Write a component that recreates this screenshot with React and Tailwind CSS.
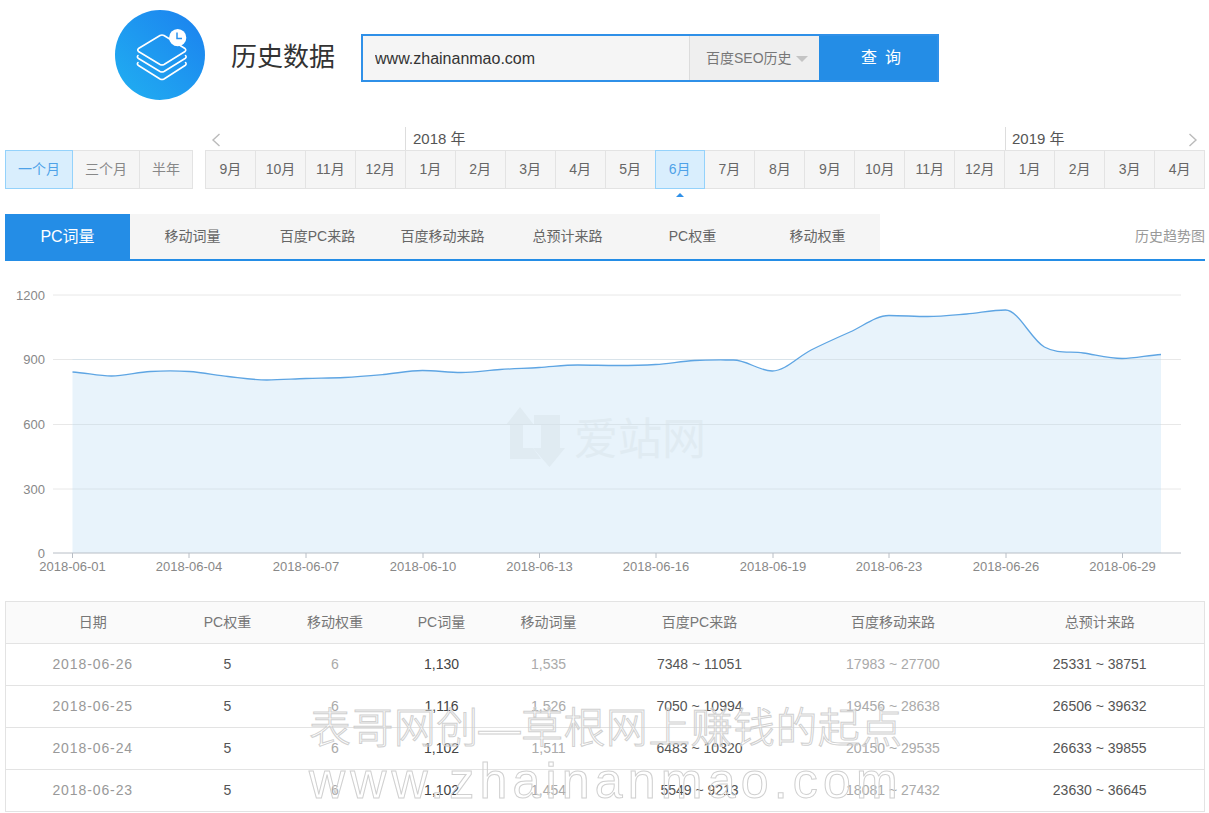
import React from "react";

const months = ["9月", "10月", "11月", "12月", "1月", "2月", "3月", "4月", "5月", "6月", "7月", "8月", "9月", "10月", "11月", "12月", "1月", "2月", "3月", "4月"];
const tabs = ["PC词量", "移动词量", "百度PC来路", "百度移动来路", "总预计来路", "PC权重", "移动权重"];

const rows = [
  ["2018-06-26", "5", "6", "1,130", "1,535", "7348 ~ 11051", "17983 ~ 27700", "25331 ~ 38751"],
  ["2018-06-25", "5", "6", "1,116", "1,526", "7050 ~ 10994", "19456 ~ 28638", "26506 ~ 39632"],
  ["2018-06-24", "5", "6", "1,102", "1,511", "6483 ~ 10320", "20150 ~ 29535", "26633 ~ 39855"],
  ["2018-06-23", "5", "6", "1,102", "1,454", "5549 ~ 9213", "18081 ~ 27432", "23630 ~ 36645"],
];

const ys = [372, 376, 371.5, 371.5, 376.5, 380, 378.5, 377.5, 374.5, 370.5, 372.5, 369.5, 367.5, 365, 365.5, 364.5, 360.5, 360, 371, 350, 332, 315.5, 316.5, 314, 310, 347, 353, 358.5, 354.5];
const points = ys.map((y, i) => [72.5 + i * 38.875, y - 285]);

// slope at a point, flat at local peaks and dips
const slope = (i) => {
  const prev = points[Math.max(i - 1, 0)][1];
  const cur = points[i][1];
  const next = points[Math.min(i + 1, points.length - 1)][1];
  if ((cur - prev) * (next - cur) < 0) return 0;
  return (next - prev) / 6;
};

const linePath = () => {
  let d = `M${points[0][0]} ${points[0][1]}`;
  for (let i = 0; i < points.length - 1; i++) {
    const p1 = points[i];
    const p2 = points[i + 1];
    d += ` C${p1[0] + 13} ${p1[1] + slope(i)} ${p2[0] - 13} ${p2[1] - slope(i + 1)} ${p2[0]} ${p2[1]}`;
  }
  return d;
};

const ticks = [
  ["2018-06-01", 72.5],
  ["2018-06-04", 189],
  ["2018-06-07", 306],
  ["2018-06-10", 423],
  ["2018-06-13", 539.5],
  ["2018-06-16", 656],
  ["2018-06-19", 773],
  ["2018-06-23", 889],
  ["2018-06-26", 1006],
  ["2018-06-29", 1122.5],
];

const yLabels = [
  ["1200", 10],
  ["900", 74.5],
  ["600", 139.5],
  ["300", 204],
];

const Logo = () => (
  <svg width="90" height="90" viewBox="0 0 90 90" className="shrink-0">
    <defs>
      <linearGradient id="logoBg" x1="0.15" y1="0.9" x2="0.9" y2="0.15">
        <stop offset="0" stopColor="#20aaf1" />
        <stop offset="1" stopColor="#1c86ef" />
      </linearGradient>
    </defs>
    <circle cx="45" cy="45" r="45" fill="url(#logoBg)" />
    <g fill="none" stroke="#fff" strokeWidth="1.6" strokeLinejoin="round" strokeLinecap="round">
      <path d="M23.5 38.5 L45 25.5 Q47 24.5 49 25.5 L70 38.5 Q71.5 40 70 41.5 L49 54.5 Q47 55.5 45 54.5 L23.5 41.5 Q22 40 23.5 38.5 Z" />
      <path d="M23 45.5 Q21.5 47 23.5 48.5 L45 61.5 Q47 62.5 49 61.5 L70 48.5 Q72 47 70.5 45.5" />
      <path d="M23 52.5 Q21.5 54 23.5 55.5 L45 69 Q47 70 49 69 L70 55.5 Q72 54 70.5 52.5" />
    </g>
    <circle cx="62.7" cy="27.7" r="8.6" fill="#fff" />
    <path d="M62 22.5 V28.5 H67" fill="none" stroke="#2a92ee" strokeWidth="1.5" />
  </svg>
);

const Chart = () => {
  const line = linePath();
  return (
    <svg width="1209" height="300" viewBox="0 0 1209 300" className="block">
      {yLabels.map(([label, y]) => (
        <g key={label}>
          <line x1="53" x2="1181" y1={y} y2={y} stroke="#e8e8e8" />
          <text x="45" y={y + 4.5} textAnchor="end" fontSize="13" fill="#888">{label}</text>
        </g>
      ))}
      <text x="45" y="272.5" textAnchor="end" fontSize="13" fill="#888">0</text>

      <path d={`${line} L1161 268 L72.5 268 Z`} fill="#e8f3fb" />
      <g>
        <path d="M520 122 L506 140 L510 140 L510 174 L541 174 L533 163 L523 163 L523 140 L534 140 Z" fill="#e0ebf2" />
        <path d="M534 130 L560 130 L560 163 L565 163 L549.5 182 L533 163 L541 163 L541 140 L534 140 Z" fill="#e0ebf2" />
        <text x="574" y="170" fontSize="44" fill="#e0ebf2">爱站网</text>
      </g>
      {yLabels.slice(1).map(([label, y]) => (
        <line key={label} x1="72.5" x2="1161" y1={y} y2={y} stroke="#d8e3ea" />
      ))}
      <path d={line} fill="none" stroke="#5ea5e3" strokeWidth="1.3" />

      <line x1="53" x2="1181" y1="268" y2="268" stroke="#b8bec6" />
      {ticks.map(([label, x]) => (
        <g key={label}>
          <line x1={x} x2={x} y1="268" y2="273" stroke="#b8bec6" />
          <text x={x} y="286" textAnchor="middle" fontSize="13" fill="#888">{label}</text>
        </g>
      ))}
    </svg>
  );
};

export default function App() {
  return (
    <div className="relative w-[1209px] h-[813px] overflow-hidden bg-white font-['Liberation_Sans','Noto_Sans_CJK_SC',sans-serif] text-[#666]">
      <header className="flex items-start pl-[115px] pt-[10px] h-[127px]">
        <Logo />
        <h1 className="ml-[26px] mt-[28px] text-[26px] leading-[38px] font-normal text-[#333]">历史数据</h1>
        <div className="flex ml-[26px] mt-[24px] w-[578px] h-[48px] border-2 border-[#2f90e8] bg-[#248de6]">
          <input
            readOnly
            defaultValue="www.zhainanmao.com"
            className="w-[326px] pl-3 pt-[2px] bg-[#f5f5f5] text-[16px] text-[#333] outline-none"
          />
          <div className="flex items-center w-[130px] pl-4 bg-[#efefef] border-l border-[#dcdcdc] text-[14px] text-[#777]">
            百度SEO历史
            <span className="ml-[4px] mt-px w-0 h-0 border-x-[6px] border-x-transparent border-t-[6px] border-t-[#c4c4c4]" />
          </div>
          <button className="flex-1 text-[16px] text-white tracking-[8px] pl-[14px]">查询</button>
        </div>
      </header>

      <section className="flex items-end pl-[5px] pr-[4px]">
        <div className="flex w-[188px] h-[39px] text-[14px] text-[#888] bg-[#f5f5f5]">
          <div className="flex items-center justify-center w-[68px] bg-[#d9eefd] border border-[#94d2fb] text-[#4ea2e8]">一个月</div>
          <div className="flex items-center justify-center w-[67px] border-y border-r border-[#e3e3e3]">三个月</div>
          <div className="flex items-center justify-center w-[53px] border-y border-r border-[#e3e3e3]">半年</div>
        </div>
        <div className="ml-[12px] w-[1000px]">
          <div className="grid grid-cols-20 h-[23px] text-[15px] leading-[23px] text-[#555]">
            <svg width="12" height="16" viewBox="0 0 12 16" className="col-start-1 ml-[5px] mt-[5px]">
              <path d="M9.5 2 L3 8 L9.5 14" fill="none" stroke="#bbb" strokeWidth="1.4" />
            </svg>
            <div className="col-start-5 col-span-2 border-l border-[#ddd] pl-[7px] whitespace-nowrap">2018 年</div>
            <div className="col-start-17 col-span-2 border-l border-[#ddd] pl-[6px] whitespace-nowrap">2019 年</div>
            <div className="col-start-20 flex justify-end pr-[6px]">
              <svg width="12" height="16" viewBox="0 0 12 16" className="mt-[5px]">
                <path d="M2.5 2 L9 8 L2.5 14" fill="none" stroke="#bbb" strokeWidth="1.4" />
              </svg>
            </div>
          </div>
          <div className="relative grid grid-cols-20 h-[39px] text-[14px] text-[#666] bg-[#f5f5f5] border-y border-r border-[#e3e3e3]">
            {months.map((m, i) =>
              i === 9 ? (
                <div key={i} className="relative -my-px flex items-center justify-center bg-[#d9eefd] border border-[#94d2fb] text-[#4ea2e8]">
                  {m}
                  <span className="absolute -bottom-[9px] left-1/2 -ml-1 w-0 h-0 border-x-4 border-x-transparent border-b-4 border-b-[#2f90e8]" />
                </div>
              ) : (
                <div key={i} className={`flex items-center justify-center border-[#e3e3e3] ${i === 10 ? "" : "border-l"}`}>{m}</div>
              )
            )}
          </div>
        </div>
      </section>

      <nav className="flex items-stretch mt-[25px] mr-[4px] ml-[5px] h-[47px] border-b-2 border-[#248de6]">
        {tabs.map((t, i) => (
          <div
            key={t}
            className={`flex items-center justify-center w-[125px] ${i === 0 ? "bg-[#248de6] text-white text-[16px]" : "bg-[#f5f5f5] text-[14px] text-[#666]"}`}
          >
            {t}
          </div>
        ))}
        <div className="flex items-center justify-end flex-1 text-[14px] text-[#999]">历史趋势图</div>
      </nav>

      <div className="mt-[24px]">
        <Chart />
      </div>

      <section className="mt-[16px] ml-[5px] w-[1200px]">
        <table className="w-full table-fixed border-collapse text-[14px] text-center border border-[#e3e3e3]">
          <thead>
            <tr className="h-[42px] bg-[#fafafa] text-[#777]">
              <th className="w-[174px] font-normal">日期</th>
              <th className="w-[96px] font-normal">PC权重</th>
              <th className="w-[119px] font-normal">移动权重</th>
              <th className="w-[94px] font-normal">PC词量</th>
              <th className="w-[120px] font-normal">移动词量</th>
              <th className="w-[182px] font-normal">百度PC来路</th>
              <th className="w-[205px] font-normal">百度移动来路</th>
              <th className="font-normal">总预计来路</th>
            </tr>
          </thead>
          <tbody>
            {rows.map((r) => (
              <tr key={r[0]} className="h-[42px] border-t border-[#e3e3e3]">
                <td className="text-[#999] tracking-[0.9px]">{r[0]}</td>
                <td className="text-[#555]">{r[1]}</td>
                <td className="text-[#aaa]">{r[2]}</td>
                <td className="text-[#444]">{r[3]}</td>
                <td className="text-[#aaa]">{r[4]}</td>
                <td className="text-[#555]">{r[5]}</td>
                <td className="text-[#aaa]">{r[6]}</td>
                <td className="text-[#555]">{r[7]}</td>
              </tr>
            ))}
          </tbody>
        </table>
      </section>

      <div className="absolute left-[309px] top-[702px] w-[620px] text-transparent [-webkit-text-stroke:1px_#d0d0d0] pointer-events-none">
        <div className="text-[42px] leading-[54px] tracking-[0.4px] font-light whitespace-nowrap">表哥网创—草根网上赚钱的起点</div>
        <div className="text-[50px] leading-[50px] tracking-[5.2px] font-light whitespace-nowrap">www.zhainanmao.com</div>
      </div>
    </div>
  );
}
